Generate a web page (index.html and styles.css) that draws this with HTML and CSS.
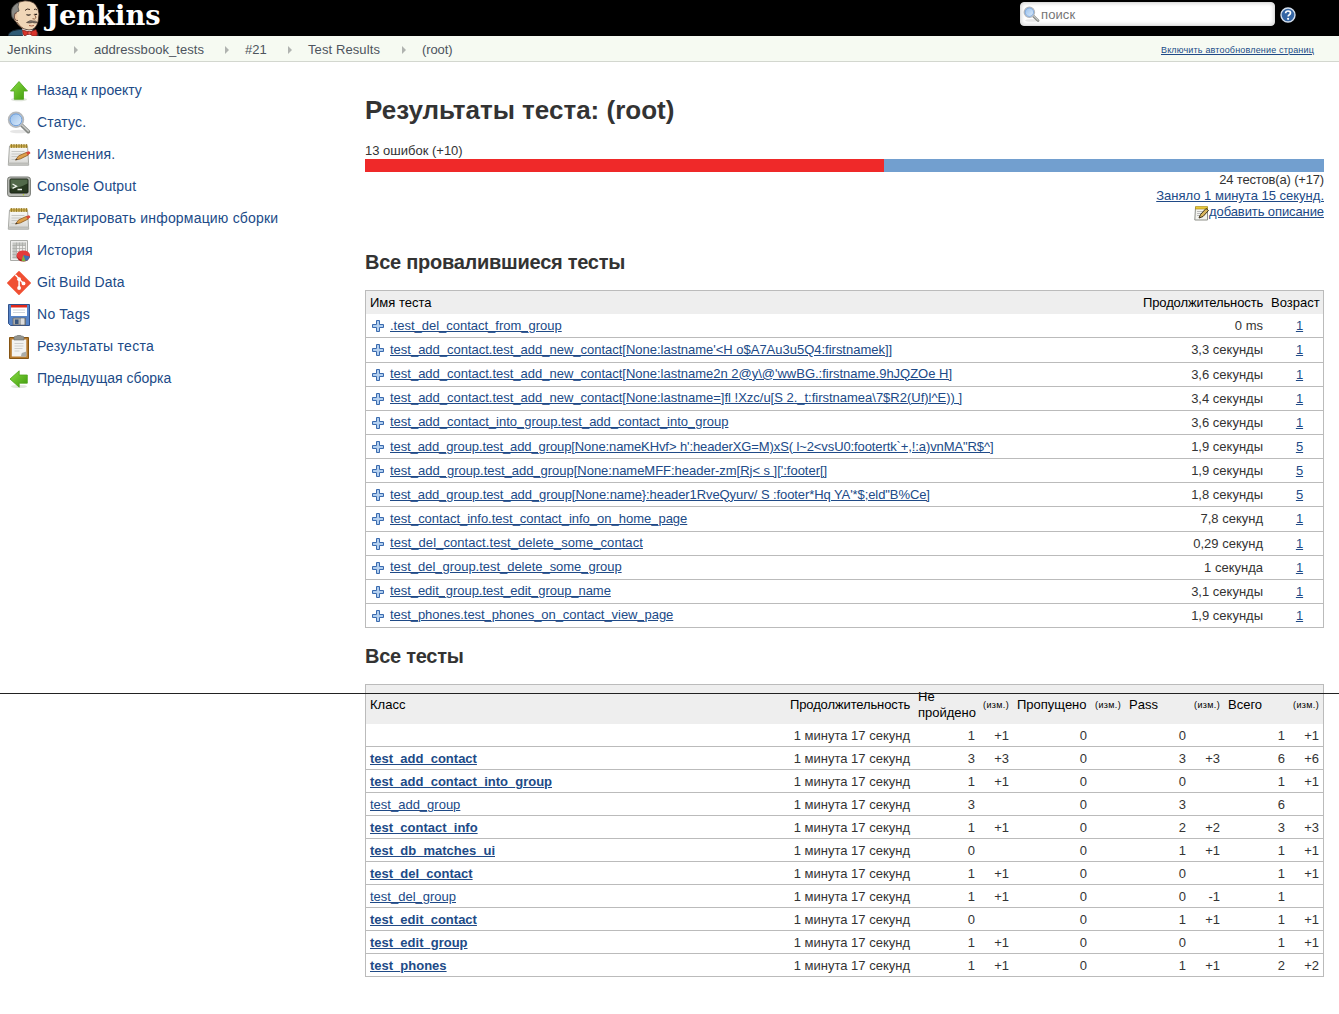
FILE: index.html
```html
<!DOCTYPE html>
<html lang="ru">
<head>
<meta charset="utf-8">
<title>Результаты теста: (root) [Jenkins]</title>
<link rel="stylesheet" href="styles.css">
</head>
<body>
<svg class="defs" width="0" height="0" aria-hidden="true">
  <defs>
    <linearGradient id="green" x1="0" y1="0" x2="1" y2="1"><stop offset="0" stop-color="#8ade45"/><stop offset="1" stop-color="#3f9a0a"/></linearGradient>
    <linearGradient id="lens" x1="0" y1="0" x2="1" y2="1"><stop offset="0" stop-color="#8fb9e8"/><stop offset="1" stop-color="#e3f0fd"/></linearGradient>
    <linearGradient id="paper" x1="0" y1="0" x2="0" y2="1"><stop offset="0" stop-color="#fbfbf9"/><stop offset="1" stop-color="#d6d6d3"/></linearGradient>
    <symbol id="mag" viewBox="0 0 24 24">
      <ellipse cx="12" cy="20.5" rx="9" ry="1.8" fill="#e6e6e6"/>
      <path d="M14.5 14l6.8 6.6" stroke="#858884" stroke-width="3.8" stroke-linecap="round"/>
      <path d="M15 14l6.3 6" stroke="#c9cbc8" stroke-width="1.6" stroke-linecap="round"/>
      <circle cx="9" cy="8.800" r="7.300" fill="url(#lens)" stroke="#b5b8bb" stroke-width="1.800"/>
      <circle cx="9" cy="8.800" r="5.900" fill="none" stroke="#6f9fdc" stroke-width="1"/>
    </symbol>
    <symbol id="note" viewBox="0 0 24 24">
      <path d="M2.500 3h18l1.200 19.200H1.300z" fill="url(#paper)" stroke="#a9aaa6"/>
      <path d="M1.500 20.500h20" stroke="#bcbdb9" stroke-width="2"/>
      <path d="M3 1.500h17.500v3.200H3z" fill="#c9a94a"/>
      <path d="M4.500 1v4M7 1v4M9.500 1v4M12 1v4M14.500 1v4M17 1v4M19.500 1v4" stroke="#8a7426" stroke-width=".8"/>
      <path d="M4.500 8.500h13M4.500 11h10M4.500 13.500h6M4.500 16.500h4" stroke="#c7c8c5"/>
      <path d="M8.500 17l3.200-4.200 8.200-3.600 1.500 2.700-8 4z" fill="#dda04b" stroke="#8c5a20" stroke-width=".8"/>
      <path d="M19 9.500l2.500-1.300q2.200.5 1.800 2.400l-2.700 1.500z" fill="#d94a3a"/>
      <path d="M8.300 17.300l1-1.500 1.400 1z" fill="#333"/>
    </symbol>
    <symbol id="plus" viewBox="0 0 12 12">
      <path d="M4.500.5h3v4h4v3h-4v4h-3v-4h-4v-3h4z" fill="#a8c8ec" stroke="#3a6aae"/>
      <path d="M6 2v8M2 6h8" stroke="#bdd6f2"/>
    </symbol>
  </defs>
</svg>

<header class="top">
  <div class="brand">
    <svg class="butler" width="34" height="36" viewBox="0 0 34 36">
      <path d="M0 36q1-5 8-6l14-2q8 2 8.500 8z" fill="#2f5a75" stroke="#17252f"/>
      <path d="M14 26l10 2 1 8H15z" fill="#fff"/>
      <path d="M5 14Q4 2 17 .8 27 .5 30 9l1 5-.8 7q-2 9-9.200 9Q12 29 8 22q-3-2-3-8z" fill="#f0d6b7" stroke="#3d2b22" stroke-width=".8"/>
      <path d="M4 17Q1 6 11 2.500L10 7l1 4-2.500 1-2 2-.3 5q-1.700 0-2.200-2z" fill="#8b8a86" stroke="#4b4a47" stroke-width=".8"/>
      <path d="M9 12.500q-3 .5-2.600 4.500.6 4 3.600 3.500" fill="#ecc9a8" stroke="#6d4c41" stroke-width=".9"/>
      <path d="M9 22q3 5 7 7" stroke="#8b6a52" fill="none"/>
      <path d="M17 10.500q2-2.500 5-1M26 9.500q2-1 3 .5" stroke="#3d2b22" fill="none"/>
      <path d="M18.500 14.500q2 1.300 4 0M26.500 14q1.200 1 2.500 0" stroke="#2a211c" stroke-width="1.200" fill="none"/>
      <path d="M26 14.500q3.500 3 .5 4.500l-2-.3" stroke="#8b5a3c" fill="none"/>
      <path d="M18.500 22.500q4-3 6.500-1.500 3-.5 4.500 1.500-3 1-5 0-3 1-6 0z" fill="#7d746c" stroke="#4b3a30" stroke-width=".6"/>
      <path d="M21 25.500q3 1 5 0" stroke="#a2573c" fill="none"/>
      <path d="M14.500 30l7 2 6.500-2.500q2 3 1 6.500h-4.500l-3-2.500-5 2.500q-2-2-2-6z" fill="#d9342b" stroke="#701711" stroke-width=".7"/>
      <path d="M20 31.500h3v3h-3z" fill="#ef5a50" stroke="#701711" stroke-width=".5"/>
    </svg>
    <span class="wordmark">Jenkins</span>
  </div>
  <div class="search">
    <div class="field"><svg width="17" height="17"><use href="#mag"/></svg><span>поиск</span></div>
    <svg width="16" height="16" viewBox="0 0 16 16"><circle cx="8" cy="8" r="7" fill="#3465a4" stroke="#d5e0ee" stroke-width="1.400"/><path d="M5.600 6.200q.1-2.200 2.500-2.200t2.400 2q0 1.200-1.400 1.900-.9.500-.9 1.500" fill="none" stroke="#fff" stroke-width="1.700"/><circle cx="8.100" cy="11.800" r="1.100" fill="#fff"/></svg>
  </div>
</header>

<nav class="crumbs">
  <span class="c1">Jenkins</span><i></i><span class="c2">addressbook_tests</span><i></i><span class="c3">#21</span><i></i><span class="c4">Test Results</span><i></i><span class="c5">(root)</span>
  <a class="refresh">Включить автообновление страниц</a>
</nav>

<div class="page">
  <aside class="side">
    <div class="task"><svg viewBox="0 0 24 24"><ellipse cx="12" cy="20.500" rx="8" ry="1.800" fill="#dfe5da"/><path d="M12 2.500l8.500 9.500h-4v8.300H7.300V12H3.500z" fill="url(#green)" stroke="#4ea51a" stroke-width=".8"/></svg><span>Назад к проекту</span></div>
    <div class="task"><svg><use href="#mag"/></svg><span class="s2">Статус.</span></div>
    <div class="task"><svg><use href="#note"/></svg><span class="s3">Изменения.</span></div>
    <div class="task"><svg viewBox="0 0 24 24"><rect x=".6" y="2" width="22.800" height="19.500" rx="2.500" fill="#b9bbb5" stroke="#777a74"/><rect x="3" y="4" width="18" height="14" rx="1" fill="#27371f" stroke="#1b2417"/><path d="M3.500 4.500h17v4q-9 5-17 5z" fill="#52694a"/><path d="M5.500 9l4 2.200-4 2.200M10.500 14.500h4.500" stroke="#eef2ea" stroke-width="1.300" fill="none"/><circle cx="16.500" cy="19.800" r=".8" fill="#b7cf2e"/></svg><span class="s4">Console Output</span></div>
    <div class="task"><svg><use href="#note"/></svg><span class="s5">Редактировать информацию сборки</span></div>
    <div class="task"><svg viewBox="0 0 24 24"><path d="M3.500 1.500h17v20h-17z" fill="#eeeeec" stroke="#aaaca8"/><path d="M5.500 3.500h4v16h-4zM9 3.500h9.500v3H9z" fill="#c4c6c2"/><path d="M9.500 3.500v16M12.500 3.500v16M15.500 3.500v16M18.500 3.500v16M5.500 6.500h13M5.500 9.500h13M5.500 12.500h13M5.500 15.500h13M5.500 18.500h13" stroke="#a6a8a4" stroke-width=".7"/><ellipse cx="16.300" cy="17.300" rx="6.600" ry="5.300" fill="#a81818"/><ellipse cx="16.300" cy="16.200" rx="6.600" ry="4.800" fill="#e33b3b"/><path d="M16.300 16l6.500 1.500q-1 3.800-4.300 4.400z" fill="#3f6fb5"/><path d="M16.300 16l2.200 5.900q-2.500.5-4-.1z" fill="#7cb342"/></svg><span class="s3">История</span></div>
    <div class="task"><svg viewBox="0 0 24 24"><path d="M12 .8L23.200 12 12 23.200.8 12z" fill="#f05033" stroke="#f05033" stroke-width="1.500" stroke-linejoin="round"/><path d="M8.300 3.800l3.800 4v9.700M12.100 8l4.400 4.500" stroke="#fff" stroke-width="1.500" fill="none"/><circle cx="12.100" cy="8.200" r="1.900" fill="#fff"/><circle cx="12.100" cy="17" r="1.900" fill="#fff"/><circle cx="16.500" cy="12.400" r="1.900" fill="#fff"/></svg><span class="s7">Git Build Data</span></div>
    <div class="task"><svg viewBox="0 0 24 24"><path d="M1.500 1.500h21v21h-19l-2-2z" fill="#5684c8" stroke="#31528c"/><path d="M4 2h16v11H4z" fill="#fff"/><path d="M4 2h16v2.500H4z" fill="#e0281c"/><path d="M6 7h12M6 9.500h12" stroke="#d0d5dc"/><path d="M6 15h12.500v7H6z" fill="#a9abab" stroke="#5e6265" stroke-width=".7"/><path d="M8 16.500h3.500v4.500H8z" fill="#38567f"/><path d="M14 15.500h3v6h-3z" fill="#ddd"/></svg><span class="s8">No Tags</span></div>
    <div class="task"><svg viewBox="0 0 24 24"><path d="M2.500 2.500h19v21h-19z" fill="#b77a2d" stroke="#865513"/><path d="M4.800 4.500h14.500v17H4.800z" fill="#f3f3f1"/><path d="M7 2q1-1 3-1 0-1 2-1t2 1q2 0 3 1v3H7z" fill="#92948f" stroke="#6b6d69" stroke-width=".6"/><path d="M7.500 8.500h9M7.500 11h9M7.500 13.500h8M7.500 16h5" stroke="#cfd0ce" stroke-width="1.200"/><path d="M19.300 16.500v5h-5.500l1-3.500z" fill="#aaaca8"/></svg><span class="s8">Результаты теста</span></div>
    <div class="task"><svg viewBox="0 0 24 24"><ellipse cx="12" cy="19.500" rx="8" ry="1.600" fill="#e2e6de"/><path d="M3 12l9.200-8.200V8h8.100v8.200h-8.100v4z" fill="url(#green)" stroke="#4ea51a" stroke-width=".8"/></svg><span>Предыдущая сборка</span></div>
  </aside>

  <main>
    <h1>Результаты теста: (root)</h1>
    <div class="fails">13 ошибок (+10)</div>
    <div class="bar"><div class="red" style="width:519px"></div></div>
    <div class="totals">
      <div class="count">24 тестов(а) (+17)</div>
      <div><a>Заняло 1 минута 15 секунд.</a></div>
      <div class="describe"><svg width="15" height="16" viewBox="0 0 15 16"><path d="M1.500 2.500h12v12.500H.8z" fill="#f3f3ef" stroke="#8d8f88"/><path d="M1.500 1.500h12v2.500h-12z" fill="#e8c83a" stroke="#a38410" stroke-width=".6"/><path d="M3 6.500h7M3 8.500h5M3 10.500h3" stroke="#bbb"/><path d="M5 13l1.500-3.500 5.500-6 2.500 2-5.500 6z" fill="#d9b45c" stroke="#3c3218"/></svg><a>добавить описание</a></div>
    </div>

    <h2 class="h-failed">Все провалившиеся тесты</h2>
    <table class="failed">
      <colgroup><col><col class="w128"><col class="w56"></colgroup>
      <tr><th>Имя теста</th><th class="dur">Продолжительность</th><th>Возраст</th></tr>
      <tr><td><svg><use href="#plus"/></svg><a>.test_del_contact_from_group</a></td><td>0 ms</td><td><a>1</a></td></tr>
      <tr class="tall"><td><svg><use href="#plus"/></svg><a>test_add_contact.test_add_new_contact[None:lastname'&lt;H o$A7Au3u5Q4:firstnamek]]</a></td><td>3,3 секунды</td><td><a>1</a></td></tr>
      <tr class="up"><td><svg><use href="#plus"/></svg><a>test_add_contact.test_add_new_contact[None:lastname2n 2@y\@'wwBG.:firstname.9hJQZOe H]</a></td><td>3,6 секунды</td><td><a>1</a></td></tr>
      <tr class="up"><td><svg><use href="#plus"/></svg><a>test_add_contact.test_add_new_contact[None:lastname=]fl !Xzc/u[S 2._t:firstnamea\7$R2(Uf)l^E)) ]</a></td><td>3,4 секунды</td><td><a>1</a></td></tr>
      <tr class="up"><td><svg><use href="#plus"/></svg><a>test_add_contact_into_group.test_add_contact_into_group</a></td><td>3,6 секунды</td><td><a>1</a></td></tr>
      <tr><td><svg><use href="#plus"/></svg><a class="t6">test_add_group.test_add_group[None:nameKHvf&gt; h':headerXG=M)xS( l~2&lt;vsU0:footertk`+,!:a)vnMA"R$^]</a></td><td>1,9 секунды</td><td><a>5</a></td></tr>
      <tr><td><svg><use href="#plus"/></svg><a class="t7">test_add_group.test_add_group[None:nameMFF:header-zm[Rj&lt; s ][':footer[]</a></td><td>1,9 секунды</td><td><a>5</a></td></tr>
      <tr><td><svg><use href="#plus"/></svg><a class="t8">test_add_group.test_add_group[None:name}:header1RveQyurv/ S :footer*Hq YA'*$;eld"B%Ce]</a></td><td>1,8 секунды</td><td><a>5</a></td></tr>
      <tr class="tall"><td><svg><use href="#plus"/></svg><a>test_contact_info.test_contact_info_on_home_page</a></td><td>7,8 секунд</td><td><a>1</a></td></tr>
      <tr class="up"><td><svg><use href="#plus"/></svg><a class="t10">test_del_contact.test_delete_some_contact</a></td><td>0,29 секунд</td><td><a>1</a></td></tr>
      <tr class="up"><td><svg><use href="#plus"/></svg><a class="t11">test_del_group.test_delete_some_group</a></td><td>1 секунда</td><td><a>1</a></td></tr>
      <tr class="up"><td><svg><use href="#plus"/></svg><a class="t12">test_edit_group.test_edit_group_name</a></td><td>3,1 секунды</td><td><a>1</a></td></tr>
      <tr class="up"><td><svg><use href="#plus"/></svg><a class="t12">test_phones.test_phones_on_contact_view_page</a></td><td>1,9 секунды</td><td><a>1</a></td></tr>
    </table>

    <h2 class="h-all">Все тесты</h2>
    <table class="all">
      <colgroup><col><col class="w128"><col class="w65"><col class="w34"><col class="w78"><col class="w34"><col class="w65"><col class="w34"><col class="w65"><col class="w34"></colgroup>
      <tr><th>Класс</th><th class="dur">Продолжительность</th><th>Не пройдено</th><th class="diff">(изм.)</th><th>Пропущено</th><th class="diff">(изм.)</th><th>Pass</th><th class="diff">(изм.)</th><th>Всего</th><th class="diff">(изм.)</th></tr>
      <tr><td></td><td>1 минута 17 секунд</td><td>1</td><td>+1</td><td>0</td><td></td><td>0</td><td></td><td>1</td><td>+1</td></tr>
      <tr><td><a class="b">test_add_contact</a></td><td>1 минута 17 секунд</td><td>3</td><td>+3</td><td>0</td><td></td><td>3</td><td>+3</td><td>6</td><td>+6</td></tr>
      <tr><td><a class="b">test_add_contact_into_group</a></td><td>1 минута 17 секунд</td><td>1</td><td>+1</td><td>0</td><td></td><td>0</td><td></td><td>1</td><td>+1</td></tr>
      <tr><td><a>test_add_group</a></td><td>1 минута 17 секунд</td><td>3</td><td></td><td>0</td><td></td><td>3</td><td></td><td>6</td><td></td></tr>
      <tr><td><a class="b">test_contact_info</a></td><td>1 минута 17 секунд</td><td>1</td><td>+1</td><td>0</td><td></td><td>2</td><td>+2</td><td>3</td><td>+3</td></tr>
      <tr><td><a class="b">test_db_matches_ui</a></td><td>1 минута 17 секунд</td><td>0</td><td></td><td>0</td><td></td><td>1</td><td>+1</td><td>1</td><td>+1</td></tr>
      <tr><td><a class="b">test_del_contact</a></td><td>1 минута 17 секунд</td><td>1</td><td>+1</td><td>0</td><td></td><td>0</td><td></td><td>1</td><td>+1</td></tr>
      <tr><td><a>test_del_group</a></td><td>1 минута 17 секунд</td><td>1</td><td>+1</td><td>0</td><td></td><td>0</td><td>-1</td><td>1</td><td></td></tr>
      <tr><td><a class="b">test_edit_contact</a></td><td>1 минута 17 секунд</td><td>0</td><td></td><td>0</td><td></td><td>1</td><td>+1</td><td>1</td><td>+1</td></tr>
      <tr><td><a class="b">test_edit_group</a></td><td>1 минута 17 секунд</td><td>1</td><td>+1</td><td>0</td><td></td><td>0</td><td></td><td>1</td><td>+1</td></tr>
      <tr><td><a class="b">test_phones</a></td><td>1 минута 17 секунд</td><td>1</td><td>+1</td><td>0</td><td></td><td>1</td><td>+1</td><td>2</td><td>+2</td></tr>
    </table>
  </main>
</div>
<div class="seam"></div>
</body>
</html>
```
FILE: styles.css
```css
* { box-sizing: border-box; }
body {
  margin: 0;
  width: 1339px;
  height: 1014px;
  position: relative;
  overflow: hidden;
  background: #fff;
  color: #333;
  font: 13px/16px "Liberation Sans", Arial, sans-serif;
  white-space: nowrap;
}
.defs { display: block; height: 0; }
svg { flex: none; }

.top { display: flex; justify-content: space-between; height: 36px; background: #000; }
.brand { display: flex; padding-left: 8px; }
.wordmark {
  margin-left: 4px;
  color: #fff;
  font: bold 27.3px/31px "DejaVu Serif", "Liberation Serif", serif;
}
.search { display: flex; gap: 5px; padding: 2px 43px 0 0; }
.search > svg { margin-top: 5px; }
.field {
  display: flex;
  align-items: center;
  width: 255px;
  height: 24px;
  padding-left: 2px;
  border-radius: 4px;
  background: #fff;
  border: 1px solid #ddd;
  box-shadow: inset 0 0 4px #ccc;
  color: #757575;
  letter-spacing: .1px;
}
.field span { margin: 2px 0 0 1px; }

.crumbs {
  display: flex;
  align-items: center;
  height: 26px;
  padding: 2px 25px 0 7px;
  border-bottom: 1px solid #d3d7cf;
  background: #f6faf2;
  color: #4d545d;
}
.crumbs i {
  margin: 0 16px 0 22px;
  border: 4px solid transparent;
  border-left-color: #b0b3b0;
  border-right: 0;
}
.c1 { width: 45px; letter-spacing: .1px; }
.c2 { width: 109px; letter-spacing: .05px; }
.c3 { width: 21px; }
.c4 { width: 72px; letter-spacing: .1px; }
.c5 { letter-spacing: -.1px; }
.refresh { margin-left: auto; font-size: 9px; letter-spacing: .17px; }

a { color: #204a87; text-decoration: underline; text-underline-offset: 1px; }

.page { display: flex; }
.side { width: 365px; padding: 12px 0 0 7px; }
.task {
  display: flex;
  align-items: center;
  gap: 6px;
  height: 32px;
  color: #204a87;
  font-size: 14px;
}
.task svg { width: 24px; height: 24px; margin-top: 2px; }
.s2 { letter-spacing: .15px; }
.s3 { letter-spacing: .2px; }
.s4 { letter-spacing: .14px; }
.s5 { letter-spacing: .19px; }
.s7 { letter-spacing: .08px; }
.s8 { letter-spacing: .27px; }

main { width: 959px; padding-top: 32px; }
h1, h2 { margin: 0; color: #333; font-weight: bold; }
h1 { height: 49px; font-size: 26px; line-height: 32px; }
.fails { height: 16px; }
.bar { height: 13px; background: #729fcf; }
.red { height: 13px; background: #ef2929; }
.totals { height: 78px; text-align: right; }
.count { letter-spacing: -.17px; }
.describe { display: flex; justify-content: flex-end; letter-spacing: -.1px; }
.describe svg { margin-top: 1px; }
h2 { font-size: 20px; line-height: 24px; letter-spacing: -.26px; }
.h-failed { height: 40px; }
.h-all { height: 56px; padding-top: 16px; }

table {
  width: 959px;
  table-layout: fixed;
  border-collapse: separate;
  border-spacing: 0;
  border: 1px solid #bbb;
  border-bottom: 0;
}
.w128 { width: 128px; }
.w56 { width: 56px; }
.w65 { width: 65px; }
.w34 { width: 34px; }
.w78 { width: 78px; }
th {
  padding: 0 4px;
  background: #eee;
  color: #000;
  font-weight: normal;
  text-align: left;
}
.dur { letter-spacing: -.12px; }
td { padding: 0 4px; border-bottom: 1px solid #bbb; text-align: right; }
td:first-child { text-align: left; }
.failed th { height: 23px; }
.failed td { height: 24px; }
.failed .tall td { height: 25px; }
.failed td:last-child { padding: 0 0 0 9px; text-align: center; }
.failed td svg { width: 12px; height: 12px; margin: 0 6px -2px 2px; }
.failed td:first-child a { letter-spacing: -.01px; }
.failed .up td:first-child { padding-bottom: 2px; }
.failed .up svg { margin-bottom: -3px; }
.failed td:first-child .t6 { letter-spacing: -.103px; }
.failed td:first-child .t7 { letter-spacing: -.02px; }
.failed td:first-child .t8 { letter-spacing: -.085px; }
.failed td:first-child .t10 { letter-spacing: .07px; }
.failed td:first-child .t11 { letter-spacing: -.03px; }
.failed td:first-child .t12 { letter-spacing: -.05px; }
.all th { height: 39px; white-space: normal; }
.all td { height: 23px; padding-top: 2px; }
.all .diff { font-size: 9px; letter-spacing: .35px; text-align: right; }
.b { font-weight: bold; }

.seam { position: absolute; left: 0; top: 693px; width: 1339px; height: 1px; background: #222; }
```
